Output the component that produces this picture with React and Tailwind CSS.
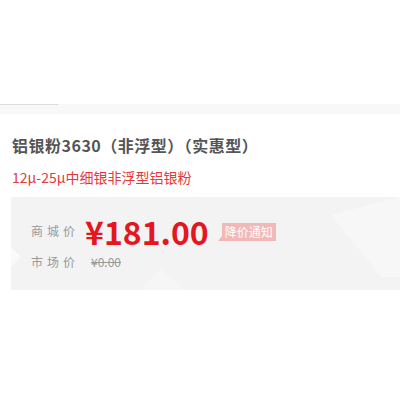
import React from "react";

const ProductInfo = () => {
  return (
    <div className="w-[400px] h-[400px] bg-white overflow-hidden font-['Microsoft_YaHei','Noto_Sans_CJK_SC',sans-serif]">
      {/* spacer */}
      <div className="h-[104px]" />

      {/* tab strip */}
      <div className="relative h-[10px] bg-[#f8f8f8]">
        <div className="absolute left-0 top-0 h-px w-[58px] bg-[#dcdcdc]" />
      </div>

      {/* title */}
      <div className="px-[12px] pt-[20px]">
        <h1 className="text-[16px] leading-[22px] font-bold text-[#555] tracking-[0.5px]">
          铝银粉3630（非浮型）（实惠型）
        </h1>
        <p className="mt-[12px] text-[14px] leading-[18px] text-[#e4393c]">12μ-25μ中细银非浮型铝银粉</p>
      </div>

      {/* price panel */}
      <div className="relative ml-[11px] mt-[11px] h-[93px] bg-[#f3f3f3] overflow-hidden">
        <svg className="absolute inset-0" width="389" height="93" viewBox="0 0 389 93">
          <polygon points="320,18 389,0 389,80 370,80" fill="#f7f7f7" />
          <polygon points="0,50 10,60 0,70" fill="#fafafa" />
          <polygon points="130,93 150,72 175,93" fill="#f6f6f6" />
        </svg>
        <div className="relative flex flex-col pl-[20px] pt-[18px]">
          <div className="flex items-center h-[32px]">
            <span className="text-[12px] text-[#999] tracking-[4px] w-[54px]">商城价</span>
            <span className="font-bold text-[32px] leading-[32px] text-[#e4161e]">
              ¥181.00
            </span>
            <span className="relative ml-[13px] mt-[2px] px-[3px] h-[18px] leading-[18px] text-[12px] text-white bg-[#f1b8b8]">
              降价通知
              <span className="absolute left-[-4px] bottom-0 w-0 h-0 border-t-[5px] border-t-transparent border-r-[4px] border-r-[#f1b8b8]" />
            </span>
          </div>
          <div className="flex items-center mt-[6px]">
            <span className="text-[12px] text-[#999] tracking-[4px] w-[60px]">市场价</span>
            <span className="text-[12px] text-[#999] line-through">¥0.00</span>
          </div>
        </div>
      </div>
    </div>
  );
};

export default function App() {
  return <ProductInfo />;
}
